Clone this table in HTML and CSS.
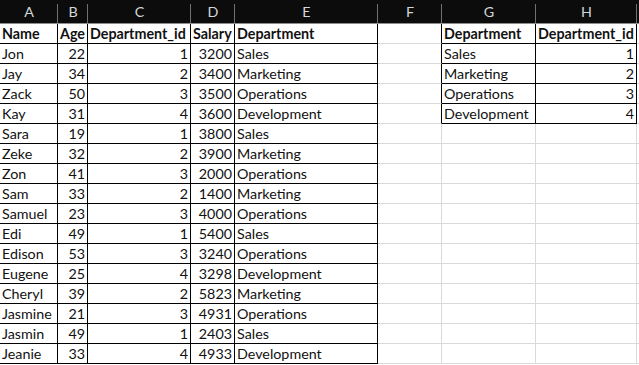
FILE: index.html
```html
<!DOCTYPE html>
<html>
<head>
<meta charset="utf-8">
<link rel="stylesheet" href="styles.css">
</head>
<body>
<div class="sheet">
  <div class="row">
    <div class="h">A</div><div class="h">B</div><div class="h">C</div><div class="h">D</div><div class="h">E</div><div class="h">F</div><div class="h">G</div><div class="h">H</div><div class="h last"></div>
  </div>
  <div class="row">
    <div class="c b bold">Name</div><div class="c b bold">Age</div><div class="c b bold">Department_id</div><div class="c b bold">Salary</div><div class="c b bold">Department</div><div class="c br"></div><div class="c b bold">Department</div><div class="c b bold">Department_id</div><div class="c"></div>
  </div>
  <div class="row">
    <div class="c b">Jon</div><div class="c b n">22</div><div class="c b n">1</div><div class="c b n">3200</div><div class="c b">Sales</div><div class="c br"></div><div class="c b">Sales</div><div class="c b n">1</div><div class="c"></div>
  </div>
  <div class="row">
    <div class="c b">Jay</div><div class="c b n">34</div><div class="c b n">2</div><div class="c b n">3400</div><div class="c b">Marketing</div><div class="c br"></div><div class="c b">Marketing</div><div class="c b n">2</div><div class="c"></div>
  </div>
  <div class="row">
    <div class="c b">Zack</div><div class="c b n">50</div><div class="c b n">3</div><div class="c b n">3500</div><div class="c b">Operations</div><div class="c br"></div><div class="c b">Operations</div><div class="c b n">3</div><div class="c"></div>
  </div>
  <div class="row">
    <div class="c b">Kay</div><div class="c b n">31</div><div class="c b n">4</div><div class="c b n">3600</div><div class="c b">Development</div><div class="c br"></div><div class="c b">Development</div><div class="c b n">4</div><div class="c"></div>
  </div>
  <div class="row">
    <div class="c b">Sara</div><div class="c b n">19</div><div class="c b n">1</div><div class="c b n">3800</div><div class="c b">Sales</div><div class="c"></div><div class="c"></div><div class="c"></div><div class="c"></div>
  </div>
  <div class="row">
    <div class="c b">Zeke</div><div class="c b n">32</div><div class="c b n">2</div><div class="c b n">3900</div><div class="c b">Marketing</div><div class="c"></div><div class="c"></div><div class="c"></div><div class="c"></div>
  </div>
  <div class="row">
    <div class="c b">Zon</div><div class="c b n">41</div><div class="c b n">3</div><div class="c b n">2000</div><div class="c b">Operations</div><div class="c"></div><div class="c"></div><div class="c"></div><div class="c"></div>
  </div>
  <div class="row">
    <div class="c b">Sam</div><div class="c b n">33</div><div class="c b n">2</div><div class="c b n">1400</div><div class="c b">Marketing</div><div class="c"></div><div class="c"></div><div class="c"></div><div class="c"></div>
  </div>
  <div class="row">
    <div class="c b">Samuel</div><div class="c b n">23</div><div class="c b n">3</div><div class="c b n">4000</div><div class="c b">Operations</div><div class="c"></div><div class="c"></div><div class="c"></div><div class="c"></div>
  </div>
  <div class="row">
    <div class="c b">Edi</div><div class="c b n">49</div><div class="c b n">1</div><div class="c b n">5400</div><div class="c b">Sales</div><div class="c"></div><div class="c"></div><div class="c"></div><div class="c"></div>
  </div>
  <div class="row">
    <div class="c b">Edison</div><div class="c b n">53</div><div class="c b n">3</div><div class="c b n">3240</div><div class="c b">Operations</div><div class="c"></div><div class="c"></div><div class="c"></div><div class="c"></div>
  </div>
  <div class="row">
    <div class="c b">Eugene</div><div class="c b n">25</div><div class="c b n">4</div><div class="c b n">3298</div><div class="c b">Development</div><div class="c"></div><div class="c"></div><div class="c"></div><div class="c"></div>
  </div>
  <div class="row">
    <div class="c b">Cheryl</div><div class="c b n">39</div><div class="c b n">2</div><div class="c b n">5823</div><div class="c b">Marketing</div><div class="c"></div><div class="c"></div><div class="c"></div><div class="c"></div>
  </div>
  <div class="row">
    <div class="c b">Jasmine</div><div class="c b n">21</div><div class="c b n">3</div><div class="c b n">4931</div><div class="c b">Operations</div><div class="c"></div><div class="c"></div><div class="c"></div><div class="c"></div>
  </div>
  <div class="row">
    <div class="c b">Jasmin</div><div class="c b n">49</div><div class="c b n">1</div><div class="c b n">2403</div><div class="c b">Sales</div><div class="c"></div><div class="c"></div><div class="c"></div><div class="c"></div>
  </div>
  <div class="row">
    <div class="c b">Jeanie</div><div class="c b n">33</div><div class="c b n">4</div><div class="c b n">4933</div><div class="c b">Development</div><div class="c"></div><div class="c"></div><div class="c"></div><div class="c"></div>
  </div>
</div>
</body>
</html>
```
FILE: styles.css
```css
html, body {
  margin: 0;
  padding: 0;
  background: #ffffff;
  overflow: hidden;
}

.sheet {
  display: grid;
  grid-template-columns: 58px 30px 103px 44px 143px 64px 94px 101px 2px;
  grid-auto-rows: 20px;
  grid-template-rows: 24px;
  width: 639px;
  font-family: Lato, "Open Sans", sans-serif;
  font-size: 14.3px;
  color: #111;
}

.row {
  display: contents;
}

.h {
  box-sizing: border-box;
  height: 24px;
  line-height: 23px;
  text-align: center;
  color: #d4d8da;
  border-bottom: 1px solid #8e8e8e;
  background: linear-gradient(#707070, #707070) right bottom / 1px 19px no-repeat, #0c0c0c;
}

.h.last {
  background: #0c0c0c;
}

.c {
  box-sizing: border-box;
  height: 20px;
  line-height: 20px;
  padding: 0 2px 0 2px;
  border-right: 1px solid #d9d9d9;
  border-bottom: 1px solid #d9d9d9;
  white-space: nowrap;
  overflow: hidden;
}

.c.b {
  border-right-color: #000;
  border-bottom-color: #000;
}

.c.br {
  border-right-color: #000;
}

.n {
  text-align: right;
}

.bold {
  font-weight: 700;
}
```
